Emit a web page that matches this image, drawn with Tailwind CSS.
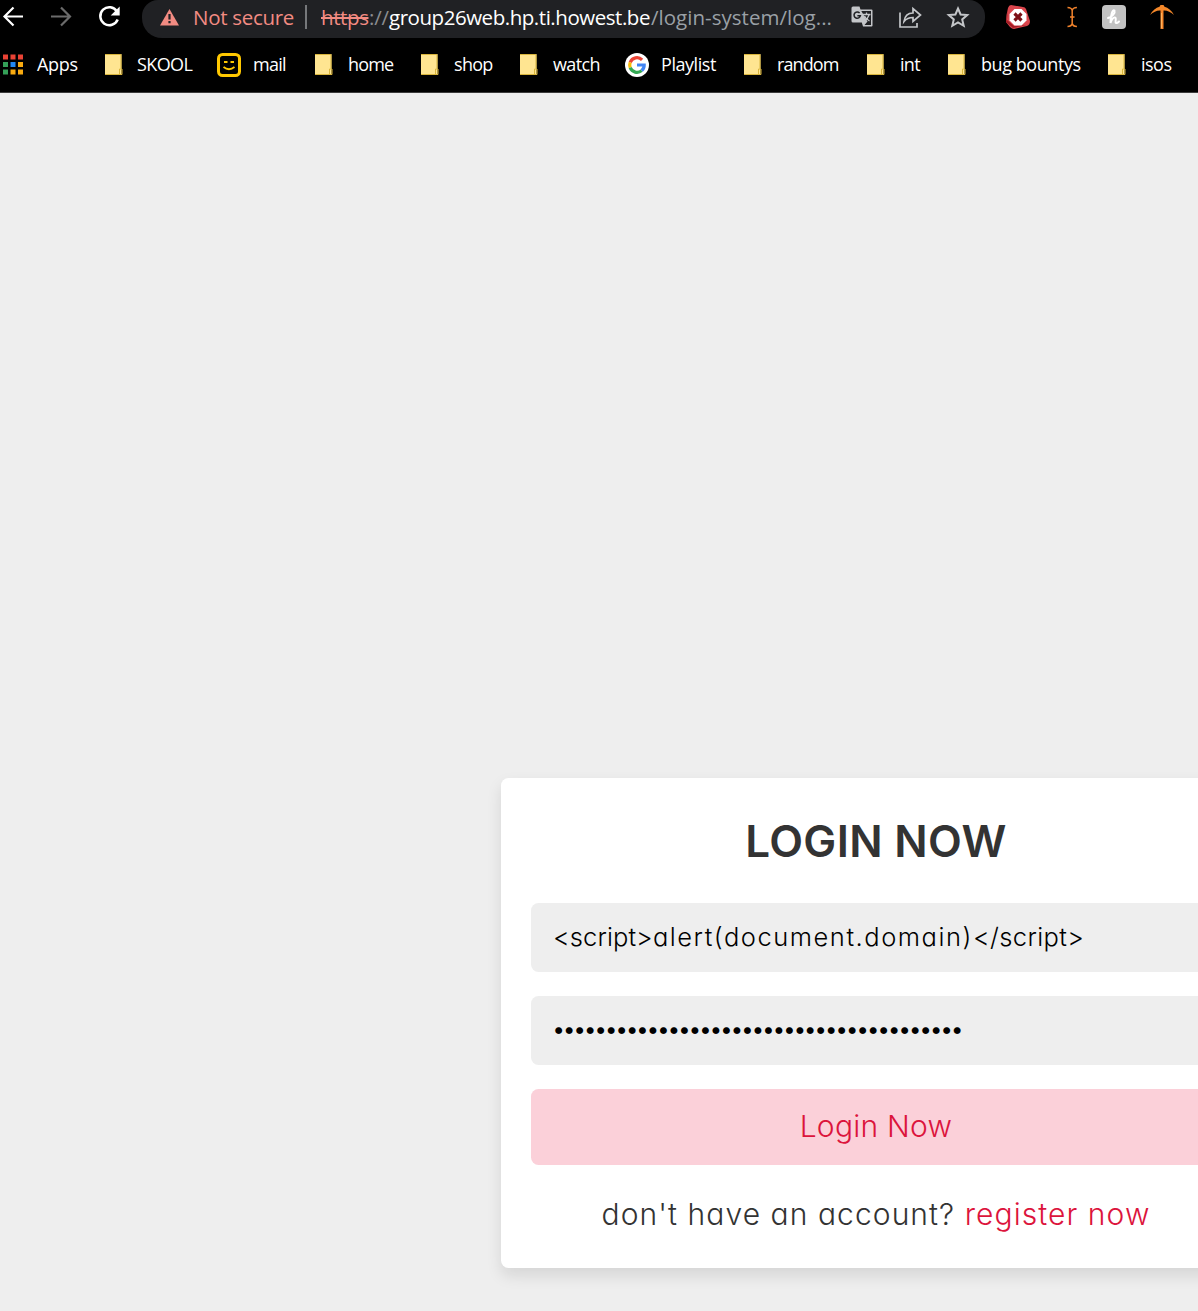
<!DOCTYPE html>
<html lang="en">
<head>
<meta charset="utf-8">
<title>Login</title>
<script src="https://cdn.jsdelivr.net/npm/@tailwindcss/browser@4"></script>
</head>
<body class="w-[1198px] h-[1311px] overflow-hidden bg-[#eeeeee] flex flex-col font-['Open_Sans',sans-serif]">
<svg class="hidden">
  <symbol id="folder" viewBox="0 0 24 24"><path d="M4 1h16.500v21H4z" fill="#ffe591"/><path d="M4 1.500h16v14M4 21.500h17v-5.500h-2.500v5" fill="none" stroke="#d9b53c"/></symbol>
</svg>
<header class="h-[93px] shrink-0 bg-black border-b border-[#3c3c3c] text-white">
  <div class="h-[38px] flex items-start whitespace-nowrap">
    <svg class="w-[142px] h-[38px] shrink-0" viewBox="0 0 142 38" fill="none" stroke-width="2.200">
      <path d="M23 16.500H5M13.500 7.500l-9 9 9 9" stroke="#fff"/>
      <path d="M51 16.500h18M61 7.500l9 9-9 9" stroke="#6b6b6b"/>
      <path d="M117 11.500A9 9 0 1 0 117.700 19.500" stroke="#fff" stroke-width="2.500"/><path d="M119.700 6.500v9h-9z" fill="#fff"/>
    </svg>
    <div class="w-[843px] h-[38px] shrink-0 rounded-b-[20px] rounded-t-[16px] bg-[#202124] flex items-start text-[20.5px] leading-[35px]">
      <svg class="ml-[18px] w-[19px] h-[38px] shrink-0" viewBox="0 0 19 38"><path d="M9.500 9L19 25.500H0z" fill="#f28b82"/><path d="M9.500 14v5.500M9.500 21v2.200" stroke="#202124" stroke-width="2.200"/></svg>
      <span class="ml-[14px] w-[112px] text-[#f28b82] tracking-[-0.3px] shrink-0">Not secure</span>
      <span class="w-[2px] h-[24px] bg-[#76787b] mt-[5px] shrink-0"></span>
      <span class="ml-[14px] w-[48px] text-[#f28b82] line-through tracking-[-0.4px] shrink-0">https</span>
      <span class="w-5 text-[#8b8d90] shrink-0 tracking-[-0.2px]">://</span>
      <span class="w-[262px] shrink-0 tracking-[-0.46px]">group26web.hp.ti.howest.be</span>
      <span class="w-[197px] shrink-0 text-[#9aa0a6] tracking-[0.03px]">/login-system/log...</span>
      <svg class="w-[134px] h-[38px] shrink-0" viewBox="848 0 134 38" fill="none" stroke="#c4c6c9" stroke-width="1.600">
        <path d="M853 6.500h6.500l1 3h11q1 0 1 1v15q0 1-1 1h-8.500l-1.200-4H853q-1.500 0-1.500-1.500V8q0-1.500 1.500-1.500z" fill="#c4c6c9" stroke="none"/><path d="M861.300 11H871v14h-6.500l3-3.500z" fill="#202124" stroke="none"/><path d="M859.600 12.900a3.200 3.200 0 1 0 .8 2.800h-3" stroke="#202124" stroke-width="1.500"/><path d="M863 14.500h7.500M866.500 12.500v2M869.300 14.500c-1 3-2.500 5-5 6.500M864.500 16c1 2.500 3 4 5 5" stroke-width="1.300"/>
        <path d="M900 12.500v14.500h17v-4M904 21.500c.8-6 4-8.500 9-8.500V8.500l7.500 6.500-7.500 6.500V17.500c-4.500 0-7 1.500-9 4z" stroke-width="1.700"/>
        <path d="M958 8.500l2.600 6 6.600.6-5 4.300 1.500 6.400-5.700-3.400-5.700 3.400 1.500-6.400-5-4.300 6.600-.6z" stroke-width="2"/>
      </svg>
    </div>
    <svg class="w-[213px] h-[38px] shrink-0" viewBox="985 0 213 38" fill="none">
      <path d="M1011 5l12 2q2 0 3 2l4 12q0 4-3 5l-13 3q-2 0-4-2l-4-5q0-7 2-14 1-3 3-3z" fill="#d9454c"/><path d="M1008 9l-2 13 7 6 14-3-13 1-7-6z" fill="#a31d26"/><path d="M1014.500 9h7l5 5v6.500l-5 5h-7l-5-5V14z" fill="#fff"/><path d="M1014.500 13.500l7 7m0-7l-7 7" stroke="#7c1016" stroke-width="3.200"/>
      <path d="M1067.500 7.500q4 0 4.700 3 .700-3 4.700-3M1067.500 26.500q4 0 4.700-3 .700 3 4.700 3M1072.200 10v14M1070 17h4.500" stroke="#f0822c" stroke-width="1.500"/>
      <rect x="1102" y="5" width="24" height="24" rx="4" fill="#c2c2c2"/><path d="M1108 18c4-1 7.500-5 6.500-7.500-2-1.500-4 5-4 12.500.8-3.500 3-6 4.500-5.500 2 .500-.5 5 1 5.500 1 .3 2-.5 3-1.500" stroke="#fff" stroke-width="2" stroke-linecap="round"/>
      <path d="M1150 15q4-7 9.500-8.200L1160.500 5h3l1 1.800Q1170 8 1174 15q-5-4.500-9.500-4.500h-5q-4.500 0-9.500 4.500z" fill="#f4882a"/><path d="M1162 10v19" stroke="#f7862a" stroke-width="3"/><path d="M1161.500 13v15" stroke="#ffb45c"/>
    </svg>
  </div>
  <nav class="h-[54px] pl-px flex items-center text-[18px] leading-[24px] whitespace-nowrap">
    <a class="w-[100px] shrink-0 flex items-center gap-3"><svg class="w-6 h-6 shrink-0" viewBox="0 0 24 24"><path d="M2 1.500h5v5H2zM9.500 1.500h5v5h-5zM17 1.500h5v5h-5z" fill="#ea4335"/><path d="M2 9h5v5H2zM2 16.500h5v5H2z" fill="#34a058"/><path d="M9.500 9h5v5h-5z" fill="#2187f3"/><path d="M17 9h5v5h-5zM9.500 16.500h5v5h-5zM17 16.500h5v5h-5z" fill="#f9ab10"/></svg><span class="pb-0.5 tracking-[-0.3px]">Apps</span></a>
    <a class="w-[116px] shrink-0 flex items-center gap-3"><svg class="w-6 h-6 shrink-0"><use href="#folder"/></svg><span class="pb-0.5 tracking-[-0.6px]">SKOOL</span></a>
    <a class="w-[94px] shrink-0 flex items-center gap-3"><svg class="w-6 h-6 shrink-0" viewBox="0 0 24 24" fill="none" stroke="#ffc800"><rect x="1.500" y="1.500" width="21" height="21" rx="4" stroke-width="3"/><path d="M7 9h3.500M13.500 9H17M6.500 14q5.500 4.500 11 0" stroke-width="1.800"/></svg><span class="pb-0.5 tracking-[-0.7px]">mail</span></a>
    <a class="w-[106px] shrink-0 flex items-center gap-3"><svg class="w-6 h-6 shrink-0"><use href="#folder"/></svg><span class="pb-0.5 pl-px tracking-[-0.85px]">home</span></a>
    <a class="w-[99px] shrink-0 flex items-center gap-3"><svg class="w-6 h-6 shrink-0"><use href="#folder"/></svg><span class="pb-0.5 pl-px tracking-[-0.7px]">shop</span></a>
    <a class="w-[109px] shrink-0 flex items-center gap-3"><svg class="w-6 h-6 shrink-0"><use href="#folder"/></svg><span class="pb-0.5 pl-px tracking-[-0.65px]">watch</span></a>
    <a class="w-[115px] shrink-0 flex items-center gap-3"><svg class="w-6 h-6 shrink-0" viewBox="0 0 24 24" fill="none" stroke-width="3.200"><circle cx="12" cy="12" r="12" fill="#fff"/><path d="M5.200 9.300a7.300 7.300 0 0 1 11.900-2.500" stroke="#ea4335"/><path d="M5.200 9.300a7.300 7.300 0 0 0 0 5.400" stroke="#fbbc05"/><path d="M5.200 14.700a7.300 7.300 0 0 0 11.500 2.900" stroke="#34a853"/><path d="M16.700 17.600a7.300 7.300 0 0 0 2.500-5.600H12" stroke="#4285f4"/></svg><span class="pb-0.5 tracking-[-0.45px]">Playlist</span></a>
    <a class="w-[123px] shrink-0 flex items-center gap-3"><svg class="w-6 h-6 shrink-0"><use href="#folder"/></svg><span class="pb-0.5 pl-px tracking-[-0.9px]">random</span></a>
    <a class="w-[81px] shrink-0 flex items-center gap-3"><svg class="w-6 h-6 shrink-0"><use href="#folder"/></svg><span class="pb-0.5 pl-px tracking-[-0.7px]">int</span></a>
    <a class="w-[160px] shrink-0 flex items-center gap-3"><svg class="w-6 h-6 shrink-0"><use href="#folder"/></svg><span class="pb-0.5 pl-px tracking-[-0.43px]">bug bountys</span></a>
    <a class="shrink-0 flex items-center gap-3"><svg class="w-6 h-6 shrink-0"><use href="#folder"/></svg><span class="pb-0.5 pl-px tracking-[-0.5px]">isos</span></a>
  </nav>
</header>
<main class="pl-[501px] pt-[685px]">
  <form class="w-[750px] h-[490px] rounded-[7.5px] bg-white shadow-[0_7.5px_15px_rgba(0,0,0,0.1)] px-[30px] font-['Inter',sans-serif] font-light text-[#333] whitespace-nowrap [font-feature-settings:'cv11']">
    <h1 class="h-[125px] pt-[29px] text-center text-[44px] leading-[68px] font-semibold tracking-[0.35px]">LOGIN NOW</h1>
    <div class="h-[69px] rounded-[7.5px] bg-[#eee] px-[22px] text-[25.5px] leading-[68px] text-black"><span class="tracking-[0.1px]">&lt;script&gt;</span><span class="tracking-[1.53px]">alert(document.domain)</span><span class="tracking-[0.4px]">&lt;/script&gt;</span></div>
    <div class="mt-6 h-[69px] rounded-[7.5px] bg-[#eee] px-[20.5px] text-[25.5px] leading-[66px] text-black tracking-[-3.86px]">•••••••••••••••••••••••••••••••••••••••</div>
    <div class="mt-6 h-[76px] rounded-[7.5px] bg-[#fbd0d9] text-center text-[30px] leading-[75px] text-[crimson] tracking-[0.25px]">Login Now</div>
    <p class="mt-[14px] text-center text-[30px] leading-[70px] tracking-[1.07px]">don't have an account? <span class="text-[crimson]">register now</span></p>
  </form>
</main>
</body>
</html>
